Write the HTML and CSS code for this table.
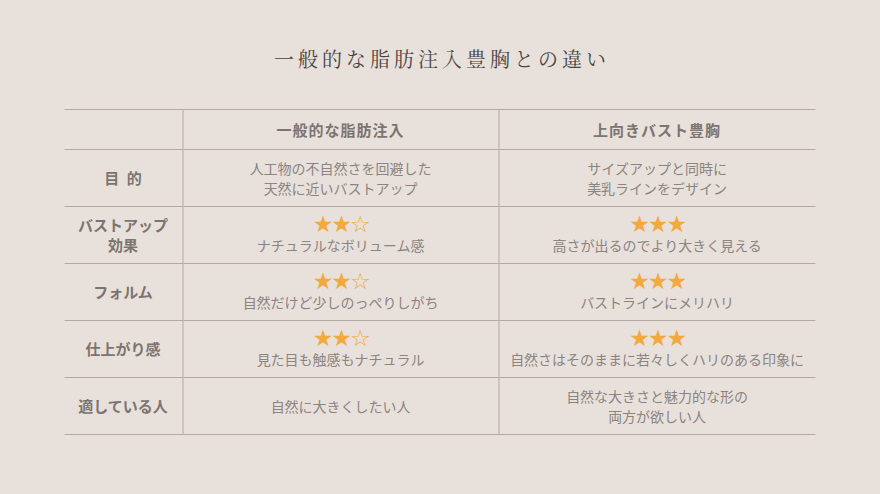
FILE: index.html
```html
<!DOCTYPE html>
<html lang="ja">
<head>
<meta charset="utf-8">
<link rel="stylesheet" href="styles.css">
</head>
<body>
<div class="page">
  <h1 class="title">一般的な脂肪注入豊胸との違い</h1>
  <table class="cmp">
    <thead>
      <tr>
        <th class="lbl"></th>
        <th class="head">一般的な脂肪注入</th>
        <th class="head">上向きバスト豊胸</th>
      </tr>
    </thead>
    <tbody>
      <tr>
        <th class="lbl">目&ensp;的</th>
        <td>人工物の不自然さを回避した<br>天然に近いバストアップ</td>
        <td>サイズアップと同時に<br>美乳ラインをデザイン</td>
      </tr>
      <tr class="rated">
        <th class="lbl">バストアップ<br>効果</th>
        <td><div class="stars">★★☆</div>ナチュラルなボリューム感</td>
        <td><div class="stars">★★★</div>高さが出るのでより大きく見える</td>
      </tr>
      <tr class="rated">
        <th class="lbl">フォルム</th>
        <td><div class="stars">★★☆</div>自然だけど少しのっぺりしがち</td>
        <td><div class="stars">★★★</div>バストラインにメリハリ</td>
      </tr>
      <tr class="rated">
        <th class="lbl">仕上がり感</th>
        <td><div class="stars">★★☆</div>見た目も触感もナチュラル</td>
        <td><div class="stars">★★★</div>自然さはそのままに若々しくハリのある印象に</td>
      </tr>
      <tr>
        <th class="lbl">適している人</th>
        <td>自然に大きくしたい人</td>
        <td>自然な大きさと魅力的な形の<br>両方が欲しい人</td>
      </tr>
    </tbody>
  </table>
</div>
</body>
</html>
```
FILE: styles.css
```css
html, body {
  margin: 0;
  padding: 0;
  background: #e8e0db;
}
.page {
  width: 880px;
  height: 494px;
  padding-top: 44px;
  box-sizing: border-box;
  font-family: "Noto Sans CJK JP", sans-serif;
}
.title {
  margin: 0 0 35px 0;
  text-align: center;
  font-family: "Noto Serif CJK JP", "Liberation Serif", "Noto Sans CJK JP", serif;
  font-weight: 400;
  font-size: 20px;
  line-height: 30px;
  letter-spacing: 4px;
  color: #4a4441;
  padding-left: 4px;
}
.cmp {
  margin: 0 auto;
  width: 751px;
  border-collapse: collapse;
  table-layout: fixed;
  transform: translateX(-0.5px);
}
.cmp th, .cmp td {
  border-top: 1px solid #b3aaa5;
  border-bottom: 1px solid #b3aaa5;
  text-align: center;
  vertical-align: middle;
  padding: 8px 0;
  line-height: 20px;
}
.cmp tr > *:nth-child(2) {
  border-left: 1px solid #b3aaa5;
  border-right: 1px solid #b3aaa5;
}
.cmp th.lbl {
  width: 118px;
  font-size: 15px;
  font-weight: 700;
  color: #7c7470;
  line-height: 20px;
}
.cmp th.head {
  height: 23px;
  font-size: 15px;
  font-weight: 700;
  color: #7c7470;
  letter-spacing: 1px;
}
.cmp thead th {
  padding: 8px 0 8px;
}
.cmp td {
  font-size: 14px;
  font-weight: 400;
  color: #8b8480;
  height: 40px;
}
.cmp tr.rated td {
  padding: 6px 0 8px;
}
.stars {
  font-family: "DejaVu Sans", sans-serif;
  font-size: 23px;
  color: #f2a93d;
  letter-spacing: -2px;
  line-height: 22px;
  height: 22px;
}
```
